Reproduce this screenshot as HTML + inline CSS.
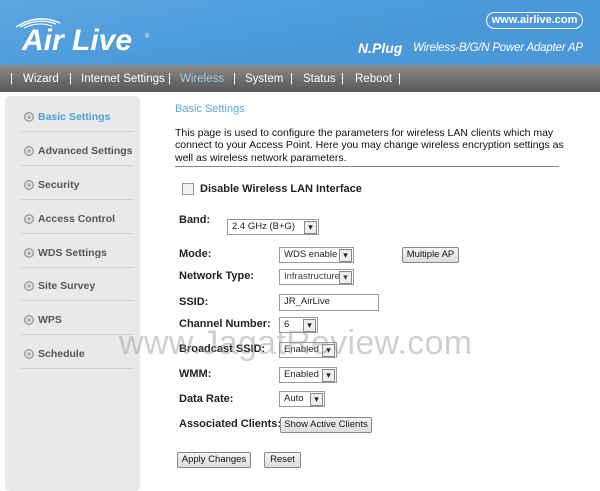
<!DOCTYPE html>
<html><head><style>
body{margin:0;width:600px;height:485px;overflow:hidden;background:#fff;font-family:"Liberation Sans",Arial,sans-serif;position:relative}
.hdr{position:absolute;left:0;top:0;width:600px;height:65px;background:linear-gradient(170deg,#5ba6e2 0%,#4a98d8 60%,#4c97d6 100%)}
.nav{position:absolute;left:0;top:65px;width:600px;height:27px;background:linear-gradient(#8b8b8b,#6a6a6a 60%,#5a5a5a);color:#fff;font-size:11.5px;line-height:28px}
.nav span{position:absolute;top:0}
.side{position:absolute;left:5px;top:96px;width:135px;height:395px;background:#e8e9ea;border-radius:5px}
.si{position:absolute;left:19px;font-size:10.5px;color:#555;}
.si i{position:absolute;left:0;top:1px;width:8px;height:8px;border-radius:50%;border:1px solid #999;background:radial-gradient(#aaa 30%,#eee 35%,#eee 50%,#bbb 60%)}
.si b{position:absolute;left:14px;top:0;white-space:nowrap;font-weight:bold}
.sep{position:absolute;left:16px;width:112px;height:1px;background:#cfd0d2}
.t{position:absolute;font-size:11px;color:#111;white-space:nowrap}
.l{position:absolute;left:179px;font-size:11px;font-weight:bold;color:#222}
.sel{position:absolute;height:14px;border:1px solid #999;background:#fff;font-size:9.5px;line-height:14px;padding-left:4px;box-sizing:content-box;color:#222}
.sel:after{content:"▾";position:absolute;right:1px;top:1px;width:11px;height:11px;border:1px solid #888;background:#eee;font-size:9px;line-height:11px;text-align:center}
.sel.n:after{display:none}
.btn{position:absolute;height:14px;border:1px solid #888;background:linear-gradient(#f4f4f4,#ddd);font-size:9.5px;line-height:14px;text-align:center;color:#111;border-radius:2px}
</style></head><body>
<div class="hdr">
<svg style="position:absolute;left:14px;top:15px" width="50" height="14"><path d="M2 12 Q24 -2 46 8" stroke="#fff" stroke-width="1.5" fill="none"/><path d="M6 12 Q24 2 42 9" stroke="#fff" stroke-width="1.3" fill="none"/><path d="M10 13 Q24 6 38 11" stroke="#fff" stroke-width="1.2" fill="none"/></svg>
<div style="position:absolute;left:22px;top:24px;color:#fff;font:italic bold 30px 'Liberation Sans',sans-serif">Air Live</div>
<div style="position:absolute;left:145px;top:34px;color:#fff;font-size:6px">®</div>
<div style="position:absolute;left:486px;top:12px;width:95px;height:15px;border:1.5px solid #fff;border-radius:9px;color:#fff;font-weight:bold;font-size:11px;line-height:15px;text-align:center">www.airlive.com</div>
<div style="position:absolute;left:358px;top:40px;color:#fff;font:italic bold 14px 'Liberation Sans',sans-serif">N.Plug</div>
<div style="position:absolute;left:413px;top:42px;color:#fff;font:italic 11.5px 'Liberation Sans',sans-serif;letter-spacing:-0.2px">Wireless-B/G/N Power Adapter AP</div>
</div>
<div class="nav">
<span style="left:10px">|</span><span style="left:23px">Wizard</span><span style="left:69px">|</span><span style="left:81px">Internet Settings</span><span style="left:168px">|</span><span style="left:180px;color:#a9c9e2">Wireless</span><span style="left:233px">|</span><span style="left:245px">System</span><span style="left:290px">|</span><span style="left:303px">Status</span><span style="left:341px">|</span><span style="left:355px">Reboot</span><span style="left:398px">|</span>
</div>
<div class="side">
<div class="si" style="top:15px;color:#4aa0d6"><i></i><b>Basic Settings</b></div>
<div class="sep" style="top:35px"></div>
<div class="si" style="top:49px"><i></i><b>Advanced Settings</b></div>
<div class="sep" style="top:69px"></div>
<div class="si" style="top:83px"><i></i><b>Security</b></div>
<div class="sep" style="top:103px"></div>
<div class="si" style="top:117px"><i></i><b>Access Control</b></div>
<div class="sep" style="top:137px"></div>
<div class="si" style="top:151px"><i></i><b>WDS Settings</b></div>
<div class="sep" style="top:171px"></div>
<div class="si" style="top:184px"><i></i><b>Site Survey</b></div>
<div class="sep" style="top:204px"></div>
<div class="si" style="top:218px"><i></i><b>WPS</b></div>
<div class="sep" style="top:238px"></div>
<div class="si" style="top:252px"><i></i><b>Schedule</b></div>
<div class="sep" style="top:272px"></div>
</div>
<div class="t" style="left:175px;top:103px;color:#5aa8d8">Basic Settings</div>
<div class="t" style="left:175px;top:127px;line-height:12.3px;font-size:10.5px">This page is used to configure the parameters for wireless LAN clients which may<br>connect to your Access Point. Here you may change wireless encryption settings as<br>well as wireless network parameters.</div>
<div style="position:absolute;left:175px;top:166px;width:384px;height:1px;background:#888"></div>
<div style="position:absolute;left:182px;top:183px;width:10px;height:10px;border:1px solid #999;background:#f2f2f2"></div>
<div class="l" style="left:200px;top:183px">Disable Wireless LAN Interface</div>
<div class="l" style="top:214px">Band:</div>
<div class="sel" style="left:227px;top:219px;width:86px">2.4 GHz (B+G)</div>
<div class="l" style="top:248px">Mode:</div>
<div class="sel" style="left:279px;top:247px;width:69px">WDS enable</div>
<div class="btn" style="left:402px;top:247px;width:55px">Multiple AP</div>
<div class="l" style="top:270px">Network Type:</div>
<div class="sel" style="left:279px;top:269px;width:69px;color:#444">Infrastructure</div>
<div class="l" style="top:296px">SSID:</div>
<div class="sel n" style="left:279px;top:294px;width:94px;height:15px">JR_AirLive</div>
<div class="l" style="top:318px">Channel Number:</div>
<div class="sel" style="left:279px;top:317px;width:33px">6</div>
<div class="l" style="top:343px">Broadcast SSID:</div>
<div class="sel" style="left:279px;top:342px;width:52px">Enabled</div>
<div class="l" style="top:368px">WMM:</div>
<div class="sel" style="left:279px;top:367px;width:52px">Enabled</div>
<div class="l" style="top:393px">Data Rate:</div>
<div class="sel" style="left:279px;top:391px;width:40px">Auto</div>
<div class="l" style="top:418px">Associated Clients:</div>
<div class="btn" style="left:280px;top:417px;width:90px">Show Active Clients</div>
<div class="btn" style="left:177px;top:452px;width:72px">Apply Changes</div>
<div class="btn" style="left:264px;top:452px;width:35px">Reset</div>
<div style="position:absolute;left:119px;top:324px;font-size:34px;color:rgba(150,150,150,0.45);letter-spacing:0.3px;white-space:nowrap">www.JagatReview.com</div>
</body></html>
